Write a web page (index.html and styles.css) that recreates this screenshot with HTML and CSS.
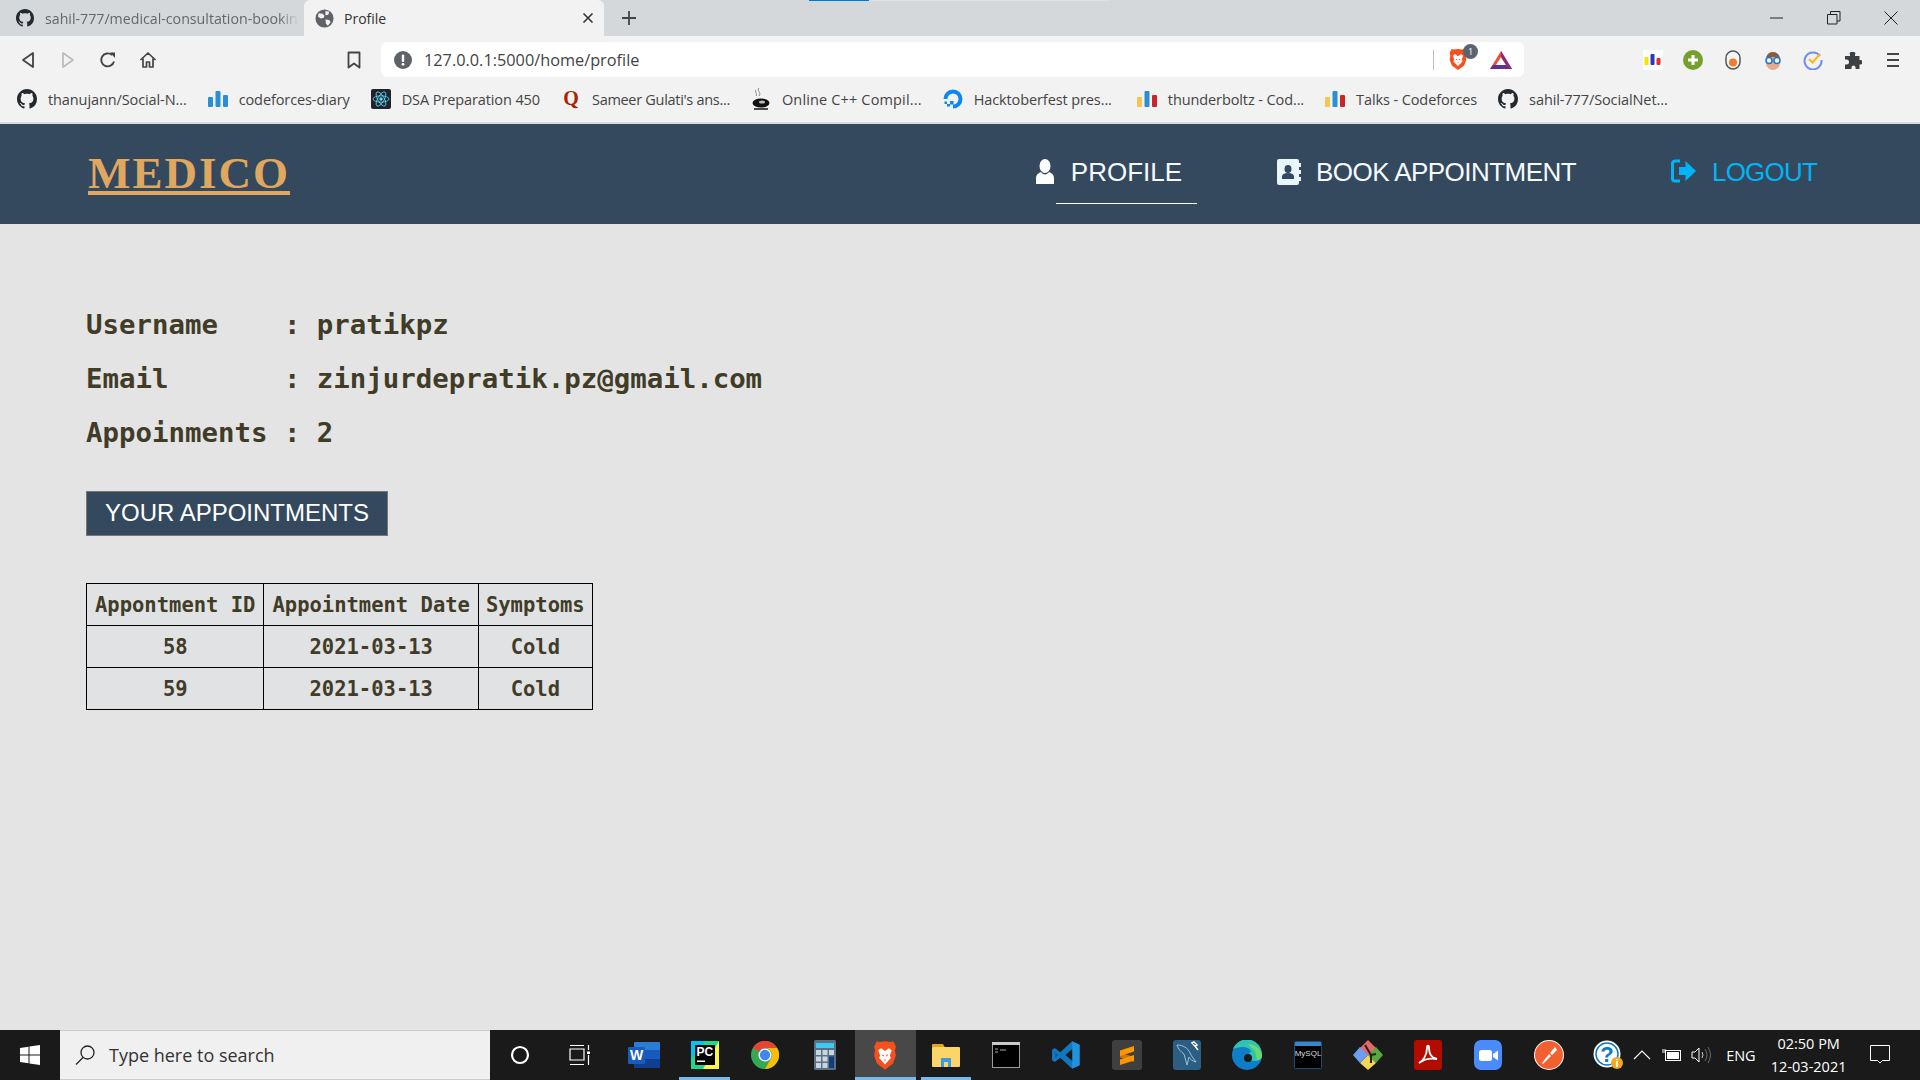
FILE: index.html
```html
<!DOCTYPE html>
<html lang="en">
<head>
<meta charset="utf-8">
<title>Profile</title>
<link rel="stylesheet" href="styles.css">
</head>
<body>
<svg class="defs" width="0" height="0" aria-hidden="true">
  <symbol id="gh" viewBox="0 0 16 16"><path d="M8 0C3.58 0 0 3.58 0 8c0 3.54 2.29 6.53 5.47 7.59.4.07.55-.17.55-.38 0-.19-.01-.82-.01-1.49-2.01.37-2.53-.49-2.69-.94-.09-.23-.48-.94-.82-1.13-.28-.15-.68-.52-.01-.53.63-.01 1.08.58 1.23.82.72 1.21 1.87.87 2.33.66.07-.52.28-.87.51-1.07-1.78-.2-3.64-.89-3.64-3.95 0-.87.31-1.59.82-2.15-.08-.2-.36-1.02.08-2.12 0 0 .67-.21 2.2.82.64-.18 1.32-.27 2-.27.68 0 1.36.09 2 .27 1.53-1.04 2.2-.82 2.2-.82.44 1.1.16 1.92.08 2.12.51.56.82 1.27.82 2.15 0 3.07-1.87 3.75-3.65 3.95.29.25.54.73.54 1.48 0 1.07-.01 1.93-.01 2.2 0 .21.15.46.55.38A8.013 8.013 0 0016 8c0-4.42-3.58-8-8-8z" fill="#24292e"/></symbol>
  <symbol id="bars-blue" viewBox="0 0 20 20"><rect x="0" y="8" width="5" height="10" rx="1" fill="#2a8fd6"/><rect x="7.5" y="2" width="5" height="16" rx="1" fill="#2a8fd6"/><rect x="15" y="6" width="5" height="12" rx="1" fill="#2a8fd6"/></symbol>
  <symbol id="bars-cf" viewBox="0 0 20 20"><rect x="0" y="8" width="5" height="10" rx="1" fill="#f6c64f"/><rect x="7.5" y="2" width="5" height="16" rx="1" fill="#2a8fd6"/><rect x="15" y="6" width="5" height="12" rx="1" fill="#c9252b"/></symbol>
  <symbol id="brave" viewBox="0 0 24 24" preserveAspectRatio="none"><path d="M12 1l5 .6 2.600-.6L22 5l-.8 3 .8 4.200-2.600 6L12 23l-7.400-4.800-2.600-6L2.800 8 2 5l2.400-4L7 1.600z" fill="#f4511e"/><path d="M12 8.500l3.600-2.200 2.600 1.700-1.700 4 .9 2-3 2.600L12 19l-2.400-2.400-3-2.600.9-2-1.700-4 2.600-1.700z" fill="#fff"/><path d="M9 11.500h2l-.6 1.500zM15 11.500h-2l.6 1.500zM11 15h2l-1 1.300z" fill="#f4511e"/></symbol>
</svg>

<header class="tabstrip">
  <div class="tab tab-idle">
    <svg class="fav" width="18" height="18"><use href="#gh"/></svg>
    <span class="tab-title tab-title-idle">sahil-777/medical-consultation-booking</span>
  </div>
  <div class="tab tab-active">
    <svg class="fav" width="19" height="19" viewBox="0 0 20 20"><circle cx="10" cy="10" r="9.500" fill="#5f6368"/><path d="M4 4.500l4 .5 2 2-1 2.500-3 .5-3-2zM11 2l4 1-1 3-3 .5zM11 11l4 .5 1.500 2.500-3 3.500-2-2z" fill="#f2f2f2"/></svg>
    <span class="tab-title">Profile</span>
    <svg class="tab-x" width="12" height="12" viewBox="0 0 12 12"><path d="M1.500 1.500l9 9M10.500 1.500l-9 9" stroke="#333" stroke-width="1.600"/></svg>
  </div>
  <svg class="newtab" width="16" height="16" viewBox="0 0 16 16"><path d="M8 1v14M1 8h14" stroke="#444" stroke-width="1.800"/></svg>
  <div class="winctl">
    <svg width="14" height="14" viewBox="0 0 14 14"><path d="M0 7h13" stroke="#222"/></svg>
    <svg width="14" height="14" viewBox="0 0 14 14"><path d="M.5 3.500h9.500v9.500H.5zM3.500 3.500V.5h9.500v9.500H10" fill="none" stroke="#222"/></svg>
    <svg width="14" height="14" viewBox="0 0 14 14"><path d="M.5.500l13 13M13.500.500l-13 13" stroke="#222"/></svg>
  </div>
  <div class="capture-bar"><span class="capture-blue"></span><span class="capture-grey"></span></div>
</header>

<div class="toolbar">
  <div class="tb-btn"><svg width="14" height="18" viewBox="0 0 14 18"><path d="M12 2v14L2 9z" fill="none" stroke="#444" stroke-width="1.800" stroke-linejoin="round"/></svg></div>
  <div class="tb-btn"><svg width="14" height="18" viewBox="0 0 14 18"><path d="M2 2v14l10-7z" fill="none" stroke="#bdbdbd" stroke-width="1.800" stroke-linejoin="round"/></svg></div>
  <div class="tb-btn"><svg width="18" height="18" viewBox="0 0 18 18"><path d="M15 10.500A6.500 6.500 0 1 1 13 4" fill="none" stroke="#444" stroke-width="1.900"/><path d="M11 1.500h5v5.500z" fill="#444"/></svg></div>
  <div class="tb-btn"><svg width="18" height="18" viewBox="0 0 18 18"><path d="M1.500 9L9 2l7.500 7M4 7.500V16h3.500v-5h3v5H14V7.500" fill="none" stroke="#444" stroke-width="1.700" stroke-linejoin="round"/></svg></div>
  <div class="tb-btn tb-bookmark"><svg width="14" height="18" viewBox="0 0 14 18"><path d="M1.500 1.500h11v15L7 12.500l-5.500 4z" fill="none" stroke="#444" stroke-width="1.800" stroke-linejoin="round"/></svg></div>
  <div class="address">
    <svg class="addr-warn" width="18" height="18" viewBox="0 0 18 18"><circle cx="9" cy="9" r="9" fill="#5f6368"/><rect x="7.800" y="3.500" width="2.400" height="7.500" rx="1" fill="#fff"/><circle cx="9" cy="13.300" r="1.400" fill="#fff"/></svg>
    <span class="addr-url">127.0.0.1:5000/home/profile</span>
    <span class="addr-sep"></span>
    <span class="addr-brave">
      <svg width="20" height="23"><use href="#brave"/></svg>
      <span class="addr-badge">1</span>
    </span>
    <svg class="addr-bat" width="24" height="20" viewBox="0 0 24 20"><path d="M12 1L23 19H1z" fill="#e8503a"/><path d="M12 7l6 9.500H6z" fill="#fff"/><path d="M1 19l3-4h16l3 4z" fill="#662d91"/><path d="M12 1l11 18-5-2.500L12 7z" fill="#8a2a7b"/></svg>
  </div>
  <div class="exts">
    <div class="ext"><svg width="20" height="20" viewBox="0 0 20 20"><rect width="20" height="20" fill="#fff"/><rect x="1.500" y="7" width="4" height="8" fill="#f7e400"/><rect x="7.500" y="4" width="4" height="11" rx="1" fill="#2b35c9"/><rect x="13.500" y="8" width="4" height="7" rx="1" fill="#ee2a2a"/></svg></div>
    <div class="ext"><svg width="20" height="20" viewBox="0 0 20 20"><circle cx="10" cy="10" r="10" fill="#74a02b"/><path d="M10 5v10M5 10h10" stroke="#fff" stroke-width="3"/></svg></div>
    <div class="ext"><svg width="16" height="20" viewBox="0 0 16 20"><rect x="1" y="1" width="14" height="18" rx="7" fill="#f5f5f5" stroke="#555" stroke-width="1.500"/><circle cx="8" cy="12.500" r="4" fill="#f47b2a"/></svg></div>
    <div class="ext"><svg width="20" height="20" viewBox="0 0 20 20"><path d="M3 9a7 7 0 0 1 14 0v4a7 7 0 0 1-14 0z" fill="#e8a98b"/><path d="M3 9a7 7 0 0 1 14 0l-3-2H6z" fill="#8b5a3c"/><circle cx="6" cy="10.500" r="3" fill="#fff" stroke="#1976d2" stroke-width="1.500"/><circle cx="14" cy="10.500" r="3" fill="#fff" stroke="#1976d2" stroke-width="1.500"/></svg></div>
    <div class="ext"><svg width="20" height="20" viewBox="0 0 20 20"><path d="M17 6a8.500 8.500 0 1 0 1.500 4" fill="none" stroke="#6a8ff0" stroke-width="2"/><path d="M6 9l3.500 3.500L17 4" fill="none" stroke="#f9b71c" stroke-width="2"/></svg></div>
    <div class="ext"><svg width="18" height="18" viewBox="0 0 18 18"><path d="M7 1h3a1.500 1.500 0 0 1 1 2.500V5h4.500v4h1a2.200 2.200 0 0 1 0 4.500h-1V18h-4v-1.500a2 2 0 0 0-4 0V18H1v-4.500h1.500a2.500 2.500 0 0 0 0-5H1V5h5V3.500A1.500 1.500 0 0 1 7 1z" fill="#3c4043"/></svg></div>
    <div class="ext"><svg width="14" height="16" viewBox="0 0 14 16"><path d="M1 2h12M1 8h12M1 14h12" stroke="#444" stroke-width="1.800"/></svg></div>
  </div>
</div>

<nav class="bookmarks">
  <a class="bm"><svg width="20" height="20"><use href="#gh"/></svg><span>thanujann/Social-N...</span></a>
  <a class="bm"><svg width="20" height="20"><use href="#bars-blue"/></svg><span>codeforces-diary</span></a>
  <a class="bm"><svg width="20" height="20" viewBox="0 0 20 20"><rect width="20" height="20" rx="2" fill="#20232a"/><circle cx="10" cy="10" r="1.700" fill="#61dafb"/><g fill="none" stroke="#61dafb" stroke-width=".8"><ellipse cx="10" cy="10" rx="8" ry="3.200"/><ellipse cx="10" cy="10" rx="8" ry="3.200" transform="rotate(60 10 10)"/><ellipse cx="10" cy="10" rx="8" ry="3.200" transform="rotate(120 10 10)"/></g></svg><span>DSA Preparation 450</span></a>
  <a class="bm bm-tight"><svg width="20" height="20" viewBox="0 0 20 20"><text x="10" y="16" class="quora">Q</text></svg><span>Sameer Gulati's ans...</span></a>
  <a class="bm bm-loose"><svg width="20" height="24" viewBox="0 0 20 24"><path d="M8 1c-3 3 3 4 0 8M5 3c-2 2 2 3 0 6" fill="none" stroke="#888"/><ellipse cx="10" cy="16" rx="8.500" ry="4.500" fill="#111"/><ellipse cx="11" cy="15" rx="3" ry="1.500" fill="#bbb"/><path d="M3 22h14" stroke="#111" stroke-width="1.500"/></svg><span>Online C++ Compil...</span></a>
  <a class="bm"><svg width="20" height="20" viewBox="0 0 20 20"><path d="M10 17.500a7.500 7.500 0 1 0-7.500-7.500" fill="none" stroke="#0d87f2" stroke-width="4"/><path d="M7 12h3.500v3.500H7zM4 15h3v2.500H4zM1.500 12.500H4V15H1.500z" fill="#0d87f2"/></svg><span>Hacktoberfest pres...</span></a>
  <a class="bm bm-after-gap"><svg width="20" height="20"><use href="#bars-cf"/></svg><span>thunderboltz - Cod...</span></a>
  <a class="bm"><svg width="20" height="20"><use href="#bars-cf"/></svg><span>Talks - Codeforces</span></a>
  <a class="bm"><svg width="20" height="20"><use href="#gh"/></svg><span>sahil-777/SocialNet...</span></a>
</nav>

<header class="sitenav">
  <a class="logo">MEDICO</a>
  <ul class="menu">
    <li class="menu-item">
      <svg class="menu-icon" width="22" height="25" viewBox="0 0 22 25"><ellipse cx="11" cy="7" rx="5.500" ry="7" fill="#fff"/><path d="M2 25v-6c0-3 2-5 5-6 1 1.500 2.500 2.500 4 2.500s3-1 4-2.500c3 1 5 3 5 6v6z" fill="#fff"/></svg>
      <a class="menu-link is-active">PROFILE</a>
    </li>
    <li class="menu-item">
      <svg class="menu-icon" width="24" height="26" viewBox="0 0 24 26"><rect x="0" y="0" width="22" height="26" rx="2" fill="#e8f5fa"/><path d="M22 4h2v4h-2zM22 11h2v4h-2zM22 18h2v4h-2z" fill="#e8f5fa"/><ellipse cx="11" cy="10" rx="3.500" ry="4" fill="#34495e"/><path d="M5 20v-2.500c0-2 2-3.500 6-3.500s6 1.500 6 3.500V20z" fill="#34495e"/></svg>
      <a class="menu-link">BOOK APPOINTMENT</a>
    </li>
    <li class="menu-item menu-logout">
      <svg class="menu-icon" width="26" height="24" viewBox="0 0 26 24"><path d="M9 2H4a2.500 2.500 0 0 0-2.500 2.500v15A2.500 2.500 0 0 0 4 22h5" fill="none" stroke="#00b4f5" stroke-width="3"/><path d="M8 8h6.500V2L25 12 14.500 22v-6H8z" fill="#00b4f5"/></svg>
      <a class="menu-link">LOGOUT</a>
    </li>
  </ul>
</header>

<main class="content">
  <pre class="facts">Username    : pratikpz
Email       : zinjurdepratik.pz@gmail.com
Appoinments : 2</pre>
  <h2 class="appt-title">YOUR APPOINTMENTS</h2>
  <table class="appt-table">
    <thead><tr><th>Appontment ID</th><th>Appointment Date</th><th>Symptoms</th></tr></thead>
    <tbody>
      <tr><td>58</td><td>2021-03-13</td><td>Cold</td></tr>
      <tr><td>59</td><td>2021-03-13</td><td>Cold</td></tr>
    </tbody>
  </table>
</main>

<footer class="taskbar">
  <div class="start"><svg width="20" height="20" viewBox="0 0 20 20"><path d="M0 3l8.500-1.200V9.500H0zM9.500 1.600L20 0v9.500H9.500zM0 10.500h8.500v7.700L0 17zM9.500 10.500H20V20L9.500 18.400z" fill="#fff"/></svg></div>
  <div class="search">
    <svg width="22" height="22" viewBox="0 0 22 22"><circle cx="13.500" cy="8.500" r="6.500" fill="none" stroke="#222" stroke-width="1.300"/><path d="M9 13.500L2 20.500" stroke="#222" stroke-width="1.300"/></svg>
    <span>Type here to search</span>
  </div>
  <div class="slots">
    <div class="slot"><svg width="20" height="20" viewBox="0 0 20 20"><circle cx="10" cy="10" r="8" fill="none" stroke="#fff" stroke-width="2.200"/></svg></div>
    <div class="slot"><svg width="22" height="22" viewBox="0 0 22 22"><path d="M1 1.500h14M1 5h14v11H1zM1 20.500h14M19.500 1v5M19.500 11v10" fill="none" stroke="#fff" stroke-width="1.200"/><rect x="18" y="7.500" width="3" height="2.500" fill="#fff"/></svg></div>
    <div class="slot slot-word"><svg width="32" height="28" viewBox="0 0 32 28"><rect x="6" y="1" width="26" height="26" rx="1" fill="#2b7cd3"/><rect x="6" y="9" width="26" height="9" fill="#185abd"/><rect x="6" y="18" width="26" height="9" fill="#103f91"/><rect x="0" y="6" width="17" height="17" rx="1" fill="#1a5cbb"/><text x="8.500" y="19" class="slot-w">W</text></svg></div>
    <div class="slot slot-open"><svg width="28" height="28" viewBox="0 0 28 28"><rect width="28" height="28" fill="#21d789"/><path d="M28 0v28H12z" fill="#fcf84a"/><path d="M0 0h14L0 18z" fill="#07c3f2"/><rect x="4" y="4" width="20" height="20" fill="#000"/><text x="5.500" y="15" class="slot-pc">PC</text><rect x="6" y="19.500" width="8" height="1.500" fill="#fff"/></svg></div>
    <div class="slot"><svg width="28" height="28" viewBox="0 0 24 24"><circle cx="12" cy="12" r="12" fill="#34a853"/><path d="M1.600 6A12 12 0 0 1 22.400 6H12a6 6 0 0 0-5.200 3z" fill="#ea4335"/><path d="M22.400 6A12 12 0 0 1 12 24l5.200-9A6 6 0 0 0 12 6z" fill="#fbbc05"/><circle cx="12" cy="12" r="5.600" fill="#fff"/><circle cx="12" cy="12" r="4.400" fill="#4285f4"/></svg></div>
    <div class="slot"><svg width="22" height="30" viewBox="0 0 22 30"><rect width="22" height="30" rx="1.500" fill="#5b7083"/><rect x="2" y="3" width="18" height="5" fill="#3ccbf0"/><g fill="#c9d6df"><rect x="2" y="10" width="5" height="5"/><rect x="8.500" y="10" width="5" height="5"/><rect x="2" y="16.500" width="5" height="5"/><rect x="8.500" y="16.500" width="5" height="5"/><rect x="2" y="23" width="5" height="5"/><rect x="8.500" y="23" width="5" height="5"/><rect x="15" y="10" width="5" height="5"/></g><rect x="15" y="16.500" width="5" height="11.500" fill="#123f7a"/></svg></div>
    <div class="slot slot-current"><svg width="26" height="31"><use href="#brave"/></svg></div>
    <div class="slot slot-open"><svg width="28" height="24" viewBox="0 0 28 24"><path d="M0 2a1 1 0 0 1 1-1h10l2 3.500H0z" fill="#e0a526"/><rect y="4" width="28" height="20" rx="1" fill="#fcd569"/><path d="M9 24v-9h10v9h-3v-5h-4v5z" fill="#3d9ae0"/></svg></div>
    <div class="slot"><svg width="28" height="26" viewBox="0 0 28 26"><rect width="28" height="26" fill="#000" stroke="#9a9a9a" stroke-width="2"/><rect width="28" height="3" fill="#c9c9c9"/><path d="M3 7h3M3 10h3M8 8h6" stroke="#aaa"/></svg></div>
    <div class="slot"><svg width="30" height="30" viewBox="0 0 24 24"><path fill-rule="evenodd" d="M17 1l6 2.800v16.400L17 23 7.500 14 3 17.400 1 16.200V7.800L3 6.600 7.500 10zM17 7l-5.600 5 5.600 5zM3.300 9.500v5L5.800 12z" fill="#1f93e0"/><path d="M17 1v6l-5.600 5L17 17v6L7.500 14 3 17.400 1 16.200V7.800L3 6.600 7.500 10z" fill="#0b6fb8" opacity=".75"/></svg></div>
    <div class="slot"><svg width="30" height="30" viewBox="0 0 30 30"><rect width="30" height="30" rx="3" fill="#3f3f3f"/><path d="M8 12.500l14 4.500v5L8 17.500z" fill="#c97700"/><path d="M22 6v5.500L8 16v-5.500z" fill="#ff9800"/><path d="M8 19.500L22 15v5.500L8 25z" fill="#ff9800"/></svg></div>
    <div class="slot"><svg width="28" height="30" viewBox="0 0 28 30"><rect width="28" height="30" rx="3" fill="#2b5e82"/><path d="M4 5c6 0 11 3 13 8 2 4 4 6 6 9-4-1-6-3-7-5l-2 8-3-11C8 12 5 9 4 5z" fill="none" stroke="#a9c8dc" stroke-width=".9"/><path d="M21 2l3 3-2 1-3-3zM22 6l3 4" stroke="#fff" stroke-width="1.500"/></svg></div>
    <div class="slot"><svg width="30" height="30" viewBox="0 0 30 30"><circle cx="15" cy="15" r="15" fill="#0f7ec9"/><path d="M1 9A15 15 0 0 1 30 15c0 4-3 6-7 6-3 0-7-1-7-5 0-2 2-3 3-5-2-3-5-4-8-4-4 0-8 1-10 2z" fill="#2fc3b1"/><path d="M16 4a14 14 0 0 1 14 11c0 3-2 5-5 5l-2-9z" fill="#6cd96a"/><circle cx="16" cy="18" r="4" fill="#1a1a1a"/></svg></div>
    <div class="slot"><svg width="28" height="28" viewBox="0 0 28 28"><rect x=".5" y=".5" width="27" height="27" rx="1" fill="#000" stroke="#1f4d80"/><rect x="1" y="1" width="26" height="4" fill="#3a85c7"/><text x="14" y="15" class="slot-mysql">MySQL</text></svg></div>
    <div class="slot"><svg width="30" height="30" viewBox="0 0 30 30"><path d="M15 0l8 8-8 8-8-8z" fill="#e8676b"/><path d="M23 7l7 8-7 8-8-8z" fill="#58a83e"/><path d="M15 15l8 8-8 7-8-7z" fill="#f2d65c"/><path d="M7 7l8 8-8 8-7-8z" fill="#6c9ef0"/><path d="M12 5l6 10v8M18 15l5-1" stroke="#222" stroke-width="2" fill="none"/></svg></div>
    <div class="slot"><svg width="28" height="30" viewBox="0 0 28 30"><rect width="28" height="30" rx="3" fill="#b30b00"/><path d="M5 23c4-2 8-8 8-15 0-3 2-3 2 0 0 7 3 10 8 11-6-1-13 0-18 4z" fill="none" stroke="#fff" stroke-width="1.800"/></svg></div>
    <div class="slot"><svg width="28" height="30" viewBox="0 0 28 30"><rect width="28" height="30" rx="7" fill="#4a8cff"/><rect x="5" y="10" width="13" height="11" rx="2.500" fill="#fff"/><path d="M19 14l5-3.500v10L19 17z" fill="#fff"/></svg></div>
    <div class="slot"><svg width="30" height="30" viewBox="0 0 30 30"><circle cx="15" cy="15" r="15" fill="#fff"/><circle cx="15" cy="15" r="14" fill="#f2602f"/><path d="M8 23l7-9 2 2-8 8zM16 13l5-6 2 3-5 5z" fill="#fff"/></svg></div>
    <div class="slot"><svg width="32" height="32" viewBox="0 0 32 32"><circle cx="14" cy="15" r="13.500" fill="#fff"/><circle cx="14" cy="15" r="11" fill="none" stroke="#0a7ac4" stroke-width="1.500"/><text x="14" y="23" class="slot-help">?</text><circle cx="24" cy="24" r="6" fill="#f2a81d"/><text x="24" y="28" class="slot-i">i</text></svg></div>
  </div>
  <div class="tray">
    <svg class="tray-chev" width="18" height="10" viewBox="0 0 18 10"><path d="M1 9l8-8 8 8" fill="none" stroke="#fff" stroke-width="1.100"/></svg>
    <svg class="tray-bat" width="20" height="14" viewBox="0 0 20 14"><rect x="3.500" y="2.500" width="15" height="10" fill="none" stroke="#fff"/><rect x="5" y="4" width="12" height="7" fill="#fff"/><path d="M1 1v4M3 1v4" stroke="#fff"/></svg>
    <svg class="tray-vol" width="22" height="18" viewBox="0 0 22 18"><path d="M1 6h3l4-4v14l-4-4H1z" fill="none" stroke="#fff"/><path d="M11 6q2 3 0 6" fill="none" stroke="#ccc"/><path d="M14 3q4 6 0 12M17 1q5 8 0 16" fill="none" stroke="#666"/></svg>
    <span class="tray-lang">ENG</span>
    <div class="tray-clock"><span>02:50 PM</span><span>12-03-2021</span></div>
    <svg class="tray-note" width="20" height="20" viewBox="0 0 20 20"><path d="M.5.500h19v15h-7L10 18l-2.500-2.500h-7z" fill="none" stroke="#fff"/></svg>
  </div>
</footer>
</body>
</html>
```

FILE: styles.css
```css
* { box-sizing: border-box; }
html, body { margin: 0; padding: 0; }
body {
  width: 1920px;
  height: 1080px;
  overflow: hidden;
  display: flex;
  flex-direction: column;
  background: #e4e4e4;
  font-family: "Open Sans", "Noto Sans", sans-serif;
}
.defs { position: absolute; }
svg { display: block; flex: none; }

/* Browser tabs */
.tabstrip {
  position: relative;
  height: 36px;
  flex: none;
  display: flex;
  align-items: flex-end;
  background: #d5d8db;
  padding-left: 16px;
}
.tab { height: 36px; display: flex; align-items: center; }
.tab-idle { width: 288px; }
.tab-active {
  width: 300px;
  background: #f2f2f2;
  border-radius: 6px 6px 0 0;
  padding-left: 11px;
  padding-right: 10px;
}
.tab-title { font-size: 14px; color: #333; margin-left: 10px; white-space: nowrap; }
.tab-title-idle {
  color: #666;
  font-size: 14.200px;
  margin-left: 11px;
  width: 254px;
  overflow: hidden;
  -webkit-mask-image: linear-gradient(to right, #000 92%, transparent 100%);
  mask-image: linear-gradient(to right, #000 92%, transparent 100%);
}
.tab-x { margin-left: auto; }
.newtab { margin: 0 0 10px 17px; }
.winctl {
  margin-left: auto;
  height: 36px;
  display: flex;
  align-items: center;
  gap: 43px;
  padding-right: 22px;
}
.capture-bar { position: absolute; left: 809px; top: 0; display: flex; height: 1px; }
.capture-blue { width: 60px; background: #0078d7; }
.capture-grey { width: 241px; background: #e0e0e0; }

/* Toolbar */
.toolbar {
  height: 41px;
  flex: none;
  display: flex;
  align-items: flex-start;
  background: #f2f2f2;
  padding: 6px 7px 0 8px;
}
.tb-btn {
  width: 40px;
  height: 35px;
  display: flex;
  align-items: center;
  justify-content: center;
}
.tb-bookmark { margin-left: 166px; }
.address {
  width: 1143px;
  height: 35px;
  margin-left: 7px;
  background: #fff;
  border-radius: 6px;
  display: flex;
  align-items: center;
  padding-left: 13px;
}
.addr-url { font-size: 16.300px; color: #444; margin-left: 12px; }
.addr-sep { width: 1px; height: 20px; background: #bbb; margin-left: auto; }
.addr-brave { position: relative; margin-left: 14px; }
.addr-badge {
  position: absolute;
  left: 15px;
  top: -4px;
  width: 15px;
  height: 15px;
  border-radius: 50%;
  background: #5c6370;
  color: #fff;
  font-size: 9px;
  line-height: 15px;
  text-align: center;
}
.addr-bat { margin-left: 21px; margin-right: 11px; }
.exts { margin-left: auto; display: flex; }
.ext { width: 40px; height: 35px; display: flex; align-items: center; justify-content: center; }

/* Bookmarks bar */
.bookmarks {
  height: 47px;
  flex: none;
  display: flex;
  align-items: center;
  gap: 21px;
  background: #f2f2f2;
  padding: 0 0 1px 17px;
  border-bottom: 2px solid #d9dcdf;
}
.bm {
  display: flex;
  align-items: center;
  gap: 11px;
  font-size: 14.500px;
  color: #444;
  white-space: nowrap;
  letter-spacing: -.1px;
}
.bm-tight { letter-spacing: -.3px; }
.bm-loose { letter-spacing: .15px; }
.bm-after-gap { margin-left: 4px; }
.quora { font-family: "Liberation Serif", serif; font-weight: 700; font-size: 20px; fill: #a82400; text-anchor: middle; }

/* Site header */
.sitenav {
  height: 100px;
  flex: none;
  display: flex;
  align-items: flex-start;
  justify-content: space-between;
  background: #34495e;
  padding: 33px 88px 0 88px;
}
.logo {
  font-family: "Liberation Serif", serif;
  font-weight: 700;
  font-size: 45px;
  line-height: 32px;
  letter-spacing: 2px;
  color: #dfa75f;
  text-decoration: underline;
  text-decoration-thickness: 4px;
  text-underline-offset: 3px;
}
.menu { list-style: none; margin: 0; padding: 0; display: flex; gap: 80px; }
.menu-item { display: flex; align-items: flex-start; }
.menu-icon { margin-top: 2px; }
.menu-link {
  display: block;
  padding: 0 15px 16px;
  font-family: "Liberation Sans", sans-serif;
  font-size: 26px;
  line-height: 30px;
  letter-spacing: -.55px;
  color: #f4fbff;
  border-bottom: 1px solid transparent;
}
.menu-link.is-active { border-bottom-color: #fff; letter-spacing: 0; }
.menu-logout .menu-link { color: #00b4f5; letter-spacing: -.8px; }

/* Page content */
.content { flex: 1; min-height: 0; padding: 74px 86px 0; }
.facts {
  margin: 0;
  font-family: "DejaVu Sans Mono", "Liberation Mono", monospace;
  font-weight: 700;
  font-size: 27.400px;
  line-height: 54px;
  color: #403c28;
}
.appt-title {
  width: 302px;
  height: 45px;
  margin: 31px 0 47px;
  border: 1px solid #777;
  background: #34495e;
  color: #fff;
  font-family: "Liberation Sans", sans-serif;
  font-weight: 400;
  font-size: 24px;
  line-height: 42px;
  text-align: center;
}
.appt-table {
  border-collapse: collapse;
  background: #e1e2e4;
  font-family: "DejaVu Sans Mono", "Liberation Mono", monospace;
  font-size: 20.500px;
  color: #403c28;
}
.appt-table th, .appt-table td {
  height: 42px;
  padding: 0 8px;
  border: 1px solid #000;
  text-align: center;
  font-weight: 700;
}
.appt-table th:last-child, .appt-table td:last-child { padding: 0 7px; }

/* Windows taskbar */
.taskbar {
  height: 50px;
  flex: none;
  display: flex;
  align-items: stretch;
  background: #1a1a1a;
}
.start { width: 60px; display: flex; align-items: center; justify-content: center; }
.search {
  width: 430px;
  display: flex;
  align-items: center;
  gap: 13px;
  padding-left: 14px;
  background: #f0f0f0;
  border-top: 1px solid #ccc;
  border-bottom: 1px solid #ccc;
  font-size: 18px;
  color: #333;
}
.slots { display: flex; }
.slot {
  width: 60.300px;
  display: flex;
  align-items: center;
  justify-content: center;
  position: relative;
}
.slot-word { margin-left: 3.500px; }
.slot-open::after, .slot-current::after {
  content: "";
  position: absolute;
  left: 5px;
  right: 5px;
  bottom: 0;
  height: 3px;
  background: #76b9ed;
}
.slot-current { background: #484848; }
.slot-current::after { left: 0; right: 0; }
.slot-w { font-family: "Liberation Sans", sans-serif; font-weight: 700; font-size: 14px; fill: #fff; text-anchor: middle; }
.slot-pc { font-family: "Liberation Sans", sans-serif; font-weight: 700; font-size: 12px; fill: #fff; }
.slot-mysql { font-family: "Liberation Sans", sans-serif; font-size: 8px; fill: #ddd; text-anchor: middle; }
.slot-help { font-family: "Liberation Sans", sans-serif; font-weight: 700; font-size: 22px; fill: #0a7ac4; text-anchor: middle; }
.slot-i { font-family: "Liberation Sans", sans-serif; font-weight: 700; font-size: 11px; fill: #fff; text-anchor: middle; }
.tray { flex: 1; display: flex; align-items: center; color: #fff; margin-left: -6px; min-width: 0; }
.tray-bat { margin-left: 11px; }
.tray-vol { margin-left: 9px; }
.tray-lang { font-size: 14.500px; margin-left: 13px; }
.tray-clock {
  display: flex;
  flex-direction: column;
  align-items: center;
  gap: 3px;
  width: 90px;
  margin-left: 8px;
  font-size: 14.500px;
  line-height: 20px;
}
.tray-note { margin-left: 16px; }
```
